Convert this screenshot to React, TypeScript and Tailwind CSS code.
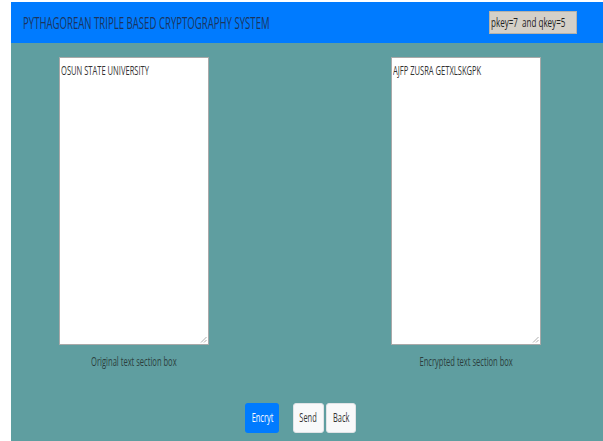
import React from "react";

const font = { fontFamily: "'Open Sans', 'Noto Sans', sans-serif" };

function Narrow({ children, className = "" }: { children: React.ReactNode; className?: string }) {
  return <span className={`inline-block whitespace-nowrap ${className}`}>{children}</span>;
}

function TextBox({ text }: { text: string }) {
  return (
    <div className="relative w-[150px] h-[288px] bg-white border border-[#a9a9a9] px-[1px] pt-[3px] leading-[16px]">
      <Narrow className="origin-left scale-x-[0.63] text-[12px] text-[#333]">{text}</Narrow>
      {/* resize grip */}
      <svg className="absolute right-[1px] bottom-[1px]" width="7" height="7" viewBox="0 0 7 7">
        <line x1="6.5" y1="1" x2="1" y2="6.5" stroke="#9a9a9a" strokeWidth="0.8" />
        <line x1="6.5" y1="4" x2="4" y2="6.5" stroke="#9a9a9a" strokeWidth="0.8" />
      </svg>
    </div>
  );
}

export default function App() {
  return (
    <div className="bg-white pl-[11px] pt-[2px] w-[603px] h-[441px] overflow-hidden" style={font}>
      <div className="bg-[#5f9ea0] h-[439px] flex flex-col">
        <header className="h-[41px] bg-[#007bff] flex items-center justify-between pl-[12px] pr-[26px]">
          <Narrow className="origin-left scale-x-[0.6] text-[16px] text-[#1b355e]">PYTHAGOREAN TRIPLE BASED CRYPTOGRAPHY SYSTEM</Narrow>
          <div className="w-[88px] h-[23px] bg-[#d4d0c8] border border-[#b5b2aa] flex items-center pl-[1px] overflow-hidden">
            <Narrow className="origin-left scale-x-[0.67] text-[12px] text-[#222]">pkey=7&nbsp; and qkey=5</Narrow>
          </div>
        </header>
        <div className="flex pl-[48px] pt-[14px] gap-[182px]">
          <div className="flex flex-col items-center">
            <TextBox text="OSUN STATE UNIVERSITY" />
            <div className="mt-[8px] h-[16px] flex justify-center w-[150px]">
              <Narrow className="origin-center scale-x-[0.63] text-[12px] text-[#2c3e3e]">Original text section box</Narrow>
            </div>
          </div>
          <div className="flex flex-col items-center">
            <TextBox text="AJFP ZUSRA GETXLSKGPK" />
            <div className="mt-[8px] h-[16px] flex justify-center w-[150px]">
              <Narrow className="origin-center scale-x-[0.63] text-[12px] text-[#2c3e3e]">Encrypted text section box</Narrow>
            </div>
          </div>
        </div>
        <div className="flex pl-[234px] mt-[34px]">
          <button className="w-[34px] h-[30px] rounded-[3px] bg-[#007bff] text-white text-[12px] flex items-center justify-center">
            <Narrow className="origin-center scale-x-[0.62]">Encryt</Narrow>
          </button>
          <button className="ml-[14px] w-[31px] h-[30px] rounded-[3px] bg-[#f8f9fa] border border-[#e0e3e6] text-[#333] text-[12px] flex items-center justify-center">
            <Narrow className="origin-center scale-x-[0.62]">Send</Narrow>
          </button>
          <button className="ml-[2px] w-[30px] h-[30px] rounded-[3px] bg-[#f8f9fa] border border-[#e0e3e6] text-[#333] text-[12px] flex items-center justify-center">
            <Narrow className="origin-center scale-x-[0.62]">Back</Narrow>
          </button>
        </div>
      </div>
    </div>
  );
}
